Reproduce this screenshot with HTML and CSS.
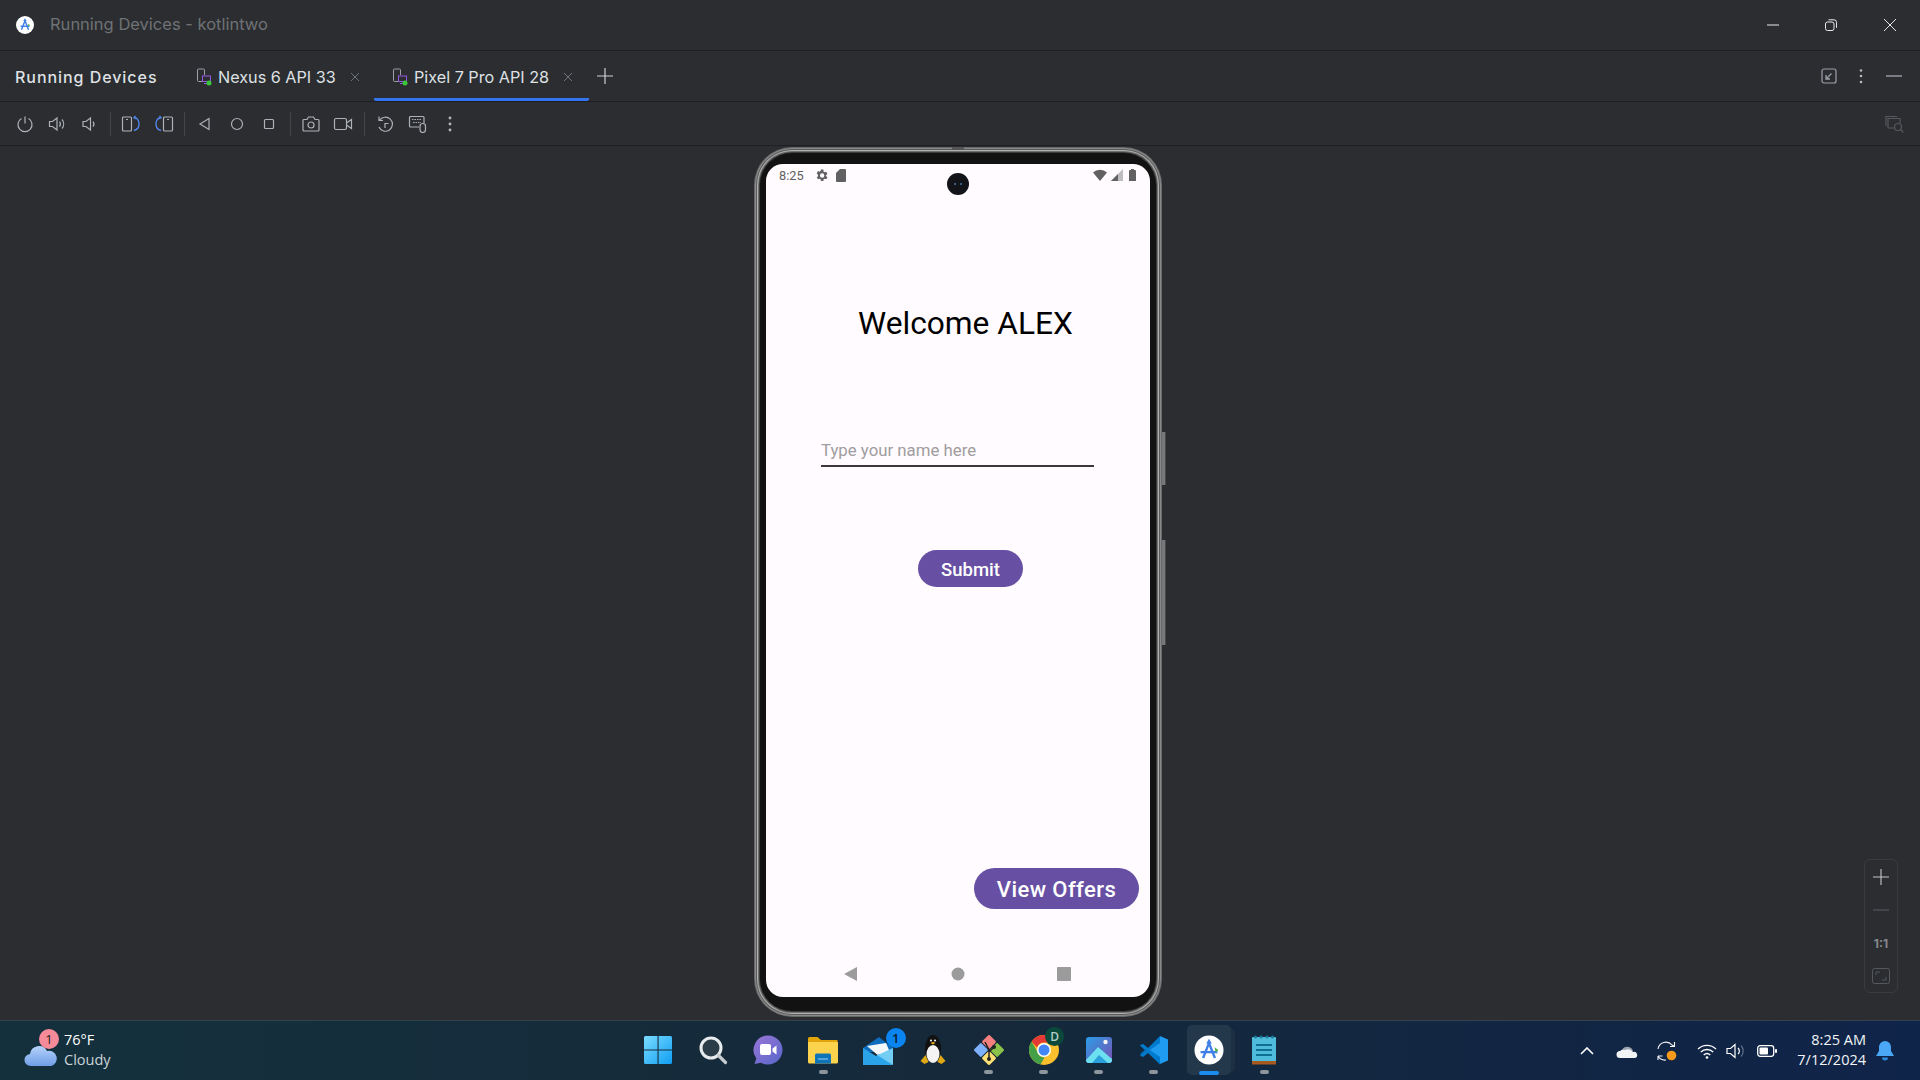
FILE: index.html
```html
<!DOCTYPE html>
<html lang="en">
<head>
<meta charset="utf-8">
<title>Running Devices - kotlintwo</title>
<link rel="stylesheet" href="styles.css">
</head>
<body>
<div class="app">
  <header class="titlebar">
    <svg class="as-small" width="18" height="18" viewBox="0 0 32 32"><circle cx="16" cy="16" r="16" fill="#fff"/><path d="M16 4l3 5h-1.500l6 15-2.400 1L16 12l-5.100 13-2.400-1 6-15H13z" fill="#3f7fe8"/><path d="M8 17h16v2.500H8z" fill="#3f7fe8"/><path d="M21 14l4 2-3 3z" fill="#4caf50"/></svg>
    <span class="title-text">Running Devices - kotlintwo</span>
    <div class="winctl">
      <svg width="14" height="14" viewBox="0 0 14 14"><path d="M1 7h12" stroke="#e8e8e8" stroke-width="1"/></svg>
      <svg width="14" height="14" viewBox="0 0 14 14"><rect x="1.500" y="4" width="8.500" height="8.500" rx="2" fill="none" stroke="#e8e8e8"/><path d="M4.500 1.800h5.500a2.500 2.500 0 0 1 2.500 2.500v5.500" fill="none" stroke="#e8e8e8"/></svg>
      <svg class="last-ctl" width="14" height="14" viewBox="0 0 14 14"><path d="M1 1l12 12M13 1L1 13" stroke="#e8e8e8" stroke-width="1"/></svg>
    </div>
  </header>

  <nav class="tabbar">
    <span class="tool-title">Running Devices</span>
    <div class="tab">
      <svg width="16" height="18" viewBox="0 0 16 18"><path d="M9 13.500H2.500a1 1 0 0 1-1-1V2a1 1 0 0 1 1-1h5a1 1 0 0 1 1 1v5" fill="none" stroke="#9da0a8"/><rect x="6.500" y="8" width="8" height="5.500" fill="none" stroke="#955ae0"/><path d="M8 15.500h5" stroke="#955ae0"/><circle cx="13" cy="15" r="2.500" fill="#39c739"/></svg>
      <span class="tab-label">Nexus 6 API 33</span>
      <svg class="tab-x" width="10" height="10" viewBox="0 0 10 10"><path d="M1 1l8 8M9 1L1 9" stroke="#6f737a"/></svg>
    </div>
    <div class="tab active">
      <svg width="16" height="18" viewBox="0 0 16 18"><path d="M9 13.500H2.500a1 1 0 0 1-1-1V2a1 1 0 0 1 1-1h5a1 1 0 0 1 1 1v5" fill="none" stroke="#9da0a8"/><rect x="6.500" y="8" width="8" height="5.500" fill="none" stroke="#955ae0"/><path d="M8 15.500h5" stroke="#955ae0"/><circle cx="13" cy="15" r="2.500" fill="#39c739"/></svg>
      <span class="tab-label">Pixel 7 Pro API 28</span>
      <svg class="tab-x" width="10" height="10" viewBox="0 0 10 10"><path d="M1 1l8 8M9 1L1 9" stroke="#6f737a"/></svg>
    </div>
    <svg class="tab-plus" width="16" height="16" viewBox="0 0 16 16"><path d="M8 0v16M0 8h16" stroke="#ced0d6" stroke-width="1.200"/></svg>
    <div class="tabbar-right">
      <svg width="16" height="16" viewBox="0 0 16 16"><rect x="1" y="1" width="14" height="14" rx="2" fill="none" stroke="#9da0a8" stroke-width="1.200"/><path d="M10.500 5.500L5.500 10.500M5 7v4h4" fill="none" stroke="#9da0a8" stroke-width="1.300"/></svg>
      <svg width="16" height="16" viewBox="0 0 16 16"><g fill="#b4b7bd"><circle cx="8" cy="2.500" r="1.300"/><circle cx="8" cy="8" r="1.300"/><circle cx="8" cy="14" r="1.300"/></g></svg>
      <svg class="last-ctl" width="16" height="16" viewBox="0 0 16 16"><path d="M0 8h16" stroke="#9da0a8" stroke-width="1.400"/></svg>
    </div>
  </nav>

  <div class="toolbar">
    <span class="tb"><svg width="18" height="18" viewBox="0 0 18 18"><path d="M5.500 3.500a7 7 0 1 0 7 0M9 1.500v7" fill="none" stroke="#aeb1b7" stroke-width="1.200"/></svg></span>
    <span class="tb"><svg width="18" height="18" viewBox="0 0 18 18"><path d="M1.500 6.500h3L9 3v12l-4.500-3.500h-3z" fill="none" stroke="#aeb1b7" stroke-width="1.200"/><path d="M11.500 6.500a4 4 0 0 1 0 5M14 4.500a7 7 0 0 1 0 9" fill="none" stroke="#aeb1b7" stroke-width="1.200"/></svg></span>
    <span class="tb"><svg width="18" height="18" viewBox="0 0 18 18"><path d="M3 6.500h3L10.500 3v12L6 11.500H3z" fill="none" stroke="#aeb1b7" stroke-width="1.200"/><path d="M13 6.500a4 4 0 0 1 0 5" fill="none" stroke="#aeb1b7" stroke-width="1.200"/></svg></span>
    <i class="sep sep1"></i>
    <span class="tb"><svg width="20" height="18" viewBox="0 0 20 18"><rect x="1.500" y="2" width="9" height="14" rx="1" fill="none" stroke="#aeb1b7" stroke-width="1.200"/><path d="M5 4.500h2" stroke="#aeb1b7"/><path d="M13 15.500c4-1 5-4 5-6.500s-1-5-3.500-6.500M14.500 .8l-1.500 2 2.500 1" fill="none" stroke="#548af7" stroke-width="1.300"/></svg></span>
    <span class="tb tb-shift"><svg width="20" height="18" viewBox="0 0 20 18"><rect x="9.500" y="2" width="9" height="14" rx="1" fill="none" stroke="#aeb1b7" stroke-width="1.200"/><path d="M13 4.500h2" stroke="#aeb1b7"/><path d="M7 15.500c-4-1-5-4-5-6.500s1-5 3.500-6.500M5.500 .8l1.500 2-2.500 1" fill="none" stroke="#548af7" stroke-width="1.300"/></svg></span>
    <i class="sep sep2"></i>
    <span class="tb"><svg width="16" height="16" viewBox="0 0 16 16"><path d="M12 2.500v11L3 8z" fill="none" stroke="#aeb1b7" stroke-width="1.200"/></svg></span>
    <span class="tb"><svg width="16" height="16" viewBox="0 0 16 16"><circle cx="8" cy="8" r="5.500" fill="none" stroke="#aeb1b7" stroke-width="1.200"/></svg></span>
    <span class="tb"><svg width="16" height="16" viewBox="0 0 16 16"><rect x="3.500" y="3.500" width="9" height="9" rx="1" fill="none" stroke="#aeb1b7" stroke-width="1.200"/></svg></span>
    <i class="sep sep3"></i>
    <span class="tb"><svg width="20" height="18" viewBox="0 0 20 18"><path d="M2 5.500a1 1 0 0 1 1-1h3l1.500-2.500h5L14 4.500h3a1 1 0 0 1 1 1V15a1 1 0 0 1-1 1H3a1 1 0 0 1-1-1z" fill="none" stroke="#aeb1b7" stroke-width="1.200"/><circle cx="10" cy="10" r="3" fill="none" stroke="#aeb1b7" stroke-width="1.200"/></svg></span>
    <span class="tb"><svg width="20" height="18" viewBox="0 0 20 18"><rect x="1.500" y="3.500" width="12" height="11" rx="1.500" fill="none" stroke="#aeb1b7" stroke-width="1.200"/><path d="M13.500 8l5-3.500v9l-5-3.500" fill="none" stroke="#aeb1b7" stroke-width="1.200"/></svg></span>
    <i class="sep sep4"></i>
    <span class="tb"><svg width="18" height="18" viewBox="0 0 18 18"><path d="M3.500 5.500A7 7 0 1 1 3 12M3 1.500v4h4M9 13V8.500h3.500" fill="none" stroke="#aeb1b7" stroke-width="1.200"/></svg></span>
    <span class="tb tb-kbd"><svg width="20" height="18" viewBox="0 0 20 18"><path d="M11 12H2.500a1 1 0 0 1-1-1V2.500a1 1 0 0 1 1-1H15a1 1 0 0 1 1 1V8" fill="none" stroke="#aeb1b7" stroke-width="1.200"/><path d="M4 4.500h10M5 7.500h8" stroke="#aeb1b7" stroke-dasharray="1.500 1"/><rect x="12" y="8.500" width="5.500" height="9" rx="2.700" fill="#2b2d30" stroke="#aeb1b7" stroke-width="1.200"/></svg></span>
    <span class="tb"><svg width="16" height="18" viewBox="0 0 16 18"><g fill="#b4b7bd"><circle cx="8" cy="3" r="1.400"/><circle cx="8" cy="9" r="1.400"/><circle cx="8" cy="15" r="1.400"/></g></svg></span>
    <svg class="tb-search" width="20" height="18" viewBox="0 0 20 18"><g fill="none" stroke="#55585d" stroke-width="1.200"><path d="M1 11V1.500h11"/><path d="M3 13V3.500h12V8M3 13h6"/><circle cx="13" cy="12" r="3.500"/><path d="M15.500 14.500l3 3"/></g></svg>
  </div>

  <main class="stage">
    <div class="phone">
      <div class="side-btn side-power"></div>
      <div class="side-btn side-volume"></div>
      <div class="camera"></div>
      <div class="screen">
        <div class="statusbar">
          <span class="clock">8:25</span>
          <svg class="gear" width="15" height="15" viewBox="0 0 24 24"><path fill="#616161" d="M19.400 13a7.500 7.500 0 0 0 0-2l2.100-1.600-2-3.500-2.500 1a7.400 7.400 0 0 0-1.700-1L15 2.300h-4l-.4 2.600a7.400 7.400 0 0 0-1.700 1l-2.500-1-2 3.500L6.500 11a7.500 7.500 0 0 0 0 2l-2.100 1.600 2 3.500 2.500-1a7.400 7.400 0 0 0 1.700 1l.4 2.600h4l.4-2.600a7.400 7.400 0 0 0 1.700-1l2.500 1 2-3.500zM13 15.500a3.500 3.500 0 1 1 0-7 3.500 3.500 0 0 1 0 7z"/></svg>
          <svg class="sd" width="10" height="13" viewBox="0 0 10 13"><path fill="#616161" d="M4 0h5a1 1 0 0 1 1 1v11a1 1 0 0 1-1 1H1a1 1 0 0 1-1-1V4z"/></svg>
          <span class="status-right">
            <svg width="14" height="12" viewBox="0 0 14 12"><path fill="#616161" d="M0 3.500a10 10 0 0 1 14 0L7 12z"/></svg>
            <svg width="12" height="12" viewBox="0 0 12 12"><path fill="#bdbdbd" d="M12 0v12H0z"/><path fill="#616161" d="M7 5v7H0z"/></svg>
            <svg class="batt" width="7" height="12" viewBox="0 0 7 12"><path fill="#616161" d="M2 0h3v1h1a1 1 0 0 1 1 1v10H0V2a1 1 0 0 1 1-1h1z"/></svg>
          </span>
        </div>
        <h1 class="welcome">Welcome ALEX</h1>
        <div class="field">Type your name here</div>
        <div class="btn btn-submit">Submit</div>
        <div class="btn btn-offers">View Offers</div>
        <div class="navbar">
          <svg width="14" height="16" viewBox="0 0 14 16"><path fill="#9b9b9b" d="M13 1v14L0 8z"/></svg>
          <svg width="14" height="14" viewBox="0 0 14 14"><circle cx="7" cy="7" r="6.500" fill="#9b9b9b"/></svg>
          <svg width="14" height="14" viewBox="0 0 14 14"><rect width="14" height="14" rx="1" fill="#9b9b9b"/></svg>
        </div>
      </div>
    </div>
    <aside class="zoompanel">
      <svg width="16" height="16" viewBox="0 0 16 16"><path d="M8 0v16M0 8h16" stroke="#c6c8cc" stroke-width="1.100"/></svg>
      <svg width="16" height="16" viewBox="0 0 16 16"><path d="M0 8h16" stroke="#55585d" stroke-width="1.100"/></svg>
      <span class="oneone">1:1</span>
      <svg width="18" height="16" viewBox="0 0 18 16"><rect x=".5" y=".5" width="17" height="15" rx="2" fill="none" stroke="#55585d"/><path d="M4 7V4h4M14 9v3h-4" fill="none" stroke="#55585d"/></svg>
    </aside>
  </main>

  <footer class="taskbar">
    <div class="weather">
      <div class="weather-icon">
        <svg width="34" height="26" viewBox="0 0 34 26"><defs><linearGradient id="cl" x1="0" y1="0" x2="0" y2="1"><stop offset="0" stop-color="#b6d2fa"/><stop offset="1" stop-color="#6f9ee8"/></linearGradient></defs><path fill="url(#cl)" d="M7 25a6 6 0 0 1-1-12 9 9 0 0 1 17-3 7.500 7.500 0 0 1 4 15z"/></svg>
        <span class="weather-badge">1</span>
      </div>
      <div class="weather-text"><span class="temp">76°F</span><span class="cond">Cloudy</span></div>
    </div>

    <div class="apps">
      <div class="app-item"><svg width="30" height="30" viewBox="0 0 30 30"><defs><linearGradient id="w" x1="0" y1="0" x2="1" y2="1"><stop offset="0" stop-color="#7bdcff"/><stop offset="1" stop-color="#0f9ef2"/></linearGradient></defs><path fill="url(#w)" d="M1 2.500A1.500 1.500 0 0 1 2.500 1h12v13.400H1zM15.600 1h12A1.500 1.500 0 0 1 29 2.500v11.900H15.600zM1 15.600h13.500V29h-12A1.500 1.500 0 0 1 1 27.500zM15.600 15.600H29v11.900a1.500 1.500 0 0 1-1.500 1.500H15.600z"/></svg></div>
      <div class="app-item"><svg width="30" height="30" viewBox="0 0 30 30"><circle cx="13" cy="13" r="10" fill="#2b3d48" stroke="#e8ecef" stroke-width="3"/><path d="M20.500 20.500l7 7" stroke="#c8ccd0" stroke-width="3.200" stroke-linecap="round"/></svg></div>
      <div class="app-item"><svg width="30" height="30" viewBox="0 0 30 30"><defs><linearGradient id="tm" x1="0" y1="0" x2="1" y2="1"><stop offset="0" stop-color="#9b76d8"/><stop offset="1" stop-color="#5566c8"/></linearGradient></defs><path fill="url(#tm)" d="M15 .5A14.500 14.500 0 1 1 8 27.700L1.500 29l1.800-5.500A14.500 14.500 0 0 1 15 .5z"/><rect x="7" y="9" width="11" height="11" rx="2" fill="#fff"/><path d="M19.500 13.500l4-3v9l-4-3z" fill="#fff"/></svg></div>
      <div class="app-item has-dot"><svg width="32" height="28" viewBox="0 0 32 28"><path fill="#e3a50c" d="M1 2.500A1.500 1.500 0 0 1 2.500 1h8L14 4h16.500v4H1z"/><path fill="#fcd34d" d="M1 6h30v20a1.500 1.500 0 0 1-1.500 1.500h-27A1.500 1.500 0 0 1 1 26z"/><path fill="#0f74b8" d="M8 19a1.500 1.500 0 0 1 1.500-1.500h13A1.500 1.500 0 0 1 24 19v8.500H8z"/><path d="M11 23h10" stroke="#7ec5f0" stroke-width="1.200"/></svg></div>
      <div class="app-item badged"><svg width="32" height="30" viewBox="0 0 32 30"><path fill="#0f6cbd" d="M1 12L17 1l14 11v4H1z"/><path fill="#f4f7fa" d="M5 10l19-3 3 7-9 7z"/><path fill="#2ba3e8" d="M1 12l13 8 3-2 14 11H1z"/><path fill="#74cdf5" d="M31 12v17L15 19l3-1z"/></svg><span class="app-badge">1</span></div>
      <div class="app-item"><svg width="26" height="32" viewBox="0 0 26 32"><ellipse cx="13" cy="15" rx="8" ry="14" fill="#111"/><ellipse cx="13" cy="20" rx="6.500" ry="9" fill="#f4f4f4"/><circle cx="11" cy="6.500" r="1" fill="#fff"/><circle cx="15" cy="6.500" r="1" fill="#fff"/><path d="M10.500 9L13 7.800 15.500 9 13 10.500z" fill="#e0a815"/><path d="M.5 27l5-6 3 7-4 2zM25.500 27l-5-6-3 7 4 2z" fill="#e0a815"/></svg></div>
      <div class="app-item has-dot"><svg width="30" height="30" viewBox="0 0 30 30"><g transform="rotate(45 15 15)"><rect x="4" y="4" width="10.500" height="10.500" rx="1.500" fill="#f47f7f"/><rect x="15.500" y="4" width="10.500" height="10.500" rx="1.500" fill="#8ac24a"/><rect x="4" y="15.500" width="10.500" height="10.500" rx="1.500" fill="#7eb1fa"/><rect x="15.500" y="15.500" width="10.500" height="10.500" rx="1.500" fill="#fde073"/></g><path d="M11 7l4 8v9M20 12l-5 5" stroke="#222" stroke-width="1.500" fill="none"/><circle cx="15" cy="24" r="2" fill="#222"/><circle cx="20" cy="12" r="2" fill="#222"/></svg></div>
      <div class="app-item has-dot chrome"><svg width="30" height="30" viewBox="0 0 30 30"><circle cx="15" cy="15" r="15" fill="#fbc02d"/><path fill="#e53935" d="M15 0a15 15 0 0 1 13 7.500H15a7.500 7.500 0 0 0-7 5L2.600 6.500A15 15 0 0 1 15 0z"/><path fill="#43a047" d="M2.600 6.500L8.500 17a7.500 7.500 0 0 0 7 5.500L11.500 29.500A15 15 0 0 1 2.600 6.500z"/><circle cx="15" cy="15" r="7" fill="#fff"/><circle cx="15" cy="15" r="5.500" fill="#4285f4"/></svg><span class="chrome-badge">D</span></div>
      <div class="app-item has-dot"><svg width="26" height="26" viewBox="0 0 26 26"><defs><linearGradient id="ph" x1="0" y1="0" x2="1" y2="1"><stop offset="0" stop-color="#2a9de8"/><stop offset="1" stop-color="#7a4fb0"/></linearGradient></defs><rect width="26" height="26" rx="3" fill="url(#ph)"/><circle cx="19.500" cy="5" r="2.200" fill="#f2f2f2"/><path fill="#6ce0f0" d="M0 23l12-13 14 12v1a3 3 0 0 1-3 3H3a3 3 0 0 1-3-3z"/><path fill="#2aa0dc" d="M6 26l7-8 9 8z"/></svg></div>
      <div class="app-item has-dot"><svg width="30" height="30" viewBox="0 0 30 30"><path fill="#0065a9" d="M1 10.500L3 9l7 5.500L8 16l-5 4.500-2-1.500 4.500-4.200z"/><path fill="#007acc" d="M21 1L9 13l-5-4-3 1.500 6 5-6 5L4 22l5-4 12 11.500z"/><path fill="#1f9cf0" d="M21 1l8 3.500v21L21 29V8L11 15l10 7z"/></svg></div>
      <div class="app-item active-app"><i class="stack"></i><span class="active-box"><svg width="30" height="30" viewBox="0 0 32 32"><circle cx="16" cy="16" r="15.500" fill="#fff"/><path d="M16 4l3 5h-1.500l6 15-2.400 1L16 12l-5.100 13-2.400-1 6-15H13z" fill="#3f7fe8"/><path d="M7 17h18v2.500H7z" fill="#3f7fe8"/><path d="M22 13l4 3-3 3z" fill="#4caf50"/></svg></span><i class="active-bar"></i></div>
      <div class="app-item has-dot"><svg width="24" height="30" viewBox="0 0 24 30"><rect y="2" width="24" height="27" rx="1" fill="#4fbcdc"/><rect y="26" width="24" height="3.500" fill="#a85b1e"/><path d="M4 10h16M4 15h16M4 20h16" stroke="#0e6f92" stroke-width="2"/><g fill="#1d7d9e"><circle cx="3.500" cy="2" r="1.500"/><circle cx="9" cy="2" r="1.500"/><circle cx="15" cy="2" r="1.500"/><circle cx="20.500" cy="2" r="1.500"/></g></svg></div>
    </div>

    <div class="tray">
      <svg class="tr-chev" width="14" height="8" viewBox="0 0 14 8"><path d="M1 7l6-6 6 6" fill="none" stroke="#fff" stroke-width="1.600"/></svg>
      <svg class="tr-cloud" width="22" height="14" viewBox="0 0 22 14"><path fill="#9aa3ad" d="M6 6a6 6 0 0 1 11 1l-6 5H4a4 4 0 0 1 2-6z"/><path fill="#f1f3f5" d="M4 14a3.500 3.500 0 0 1 0-7 5 5 0 0 1 5-1 6 6 0 0 1 8 2 3 3 0 0 1 2 6z"/></svg>
      <svg class="tr-sync" width="22" height="22" viewBox="0 0 22 22"><path d="M2 9a8 8 0 0 1 14-4l2 1M18.500 2v4.500H14M2 16v4M2 16h4.500M2 16a8 8 0 0 0 8 4" fill="none" stroke="#f1f3f5" stroke-width="1.100"/><circle cx="15.500" cy="15.500" r="4.800" fill="#f79a1b"/></svg>
      <svg class="tr-wifi" width="20" height="16" viewBox="0 0 20 16"><path d="M1 6a13 13 0 0 1 18 0M3.800 9a9 9 0 0 1 12.400 0M6.700 12a5 5 0 0 1 6.600 0" fill="none" stroke="#fff" stroke-width="1.300"/><circle cx="10" cy="14.500" r="1.300" fill="#fff"/></svg>
      <svg class="tr-vol" width="20" height="18" viewBox="0 0 20 18"><path d="M1 6.500h3.500L9 2.500v13l-4.500-4H1z" fill="none" stroke="#fff" stroke-width="1.200"/><path d="M12 6a4 4 0 0 1 0 6" fill="none" stroke="#fff" stroke-width="1.200"/><path d="M15 3.500a8 8 0 0 1 0 11" fill="none" stroke="#5d6d87" stroke-width="1.200"/></svg>
      <svg class="tr-bat" width="20" height="12" viewBox="0 0 20 12"><rect x=".7" y=".7" width="16" height="10.600" rx="2.500" fill="none" stroke="#fff" stroke-width="1.300"/><rect x="2.500" y="2.500" width="8.500" height="7" rx="1" fill="#fff"/><rect x="18" y="4" width="2" height="4" rx="1" fill="#fff"/></svg>
      <div class="clockbox"><span>8:25 AM</span><span>7/12/2024</span></div>
      <svg class="tr-bell" width="18" height="20" viewBox="0 0 18 20"><path fill="#4aa8f7" d="M9 0a6 6 0 0 1 6 6v4l3 5H0l3-5V6a6 6 0 0 1 6-6z"/><path fill="#2b8ee0" d="M6 16.500h6a3 3 0 0 1-6 0z"/></svg>
    </div>
  </footer>
</div>
</body>
</html>
```
FILE: styles.css
```css
* { box-sizing: border-box; }
html, body { margin: 0; padding: 0; height: 100%; }
body { background: #2b2d30; font-family: Inter, "Noto Sans", sans-serif; overflow: hidden; }
svg { display: block; flex: none; }
.app { width: 1920px; height: 1080px; display: flex; flex-direction: column; }

.titlebar { height: 51px; display: flex; align-items: center; padding-left: 16px; border-bottom: 1px solid #1e1f22; flex: none; }
.title-text { margin-left: 16px; margin-top: -2px; font-size: 16.5px; color: #6f7276; }
.winctl { margin-left: auto; display: flex; gap: 44px; padding-right: 23px; }
.last-ctl { margin-left: 1px; }

.tabbar { height: 51px; display: flex; align-items: center; border-bottom: 1px solid #1e1f22; flex: none; }
.tool-title { margin-left: 15px; width: 181px; padding-top: 2px; font-size: 16px; font-weight: 500; letter-spacing: .95px; color: #dfe1e5; }
.tab { height: 50px; display: flex; align-items: center; padding-top: 2px; color: #dfe1e5; font-size: 16.2px; width: 178px; }
.tab-label { margin-left: 6px; letter-spacing: 0; white-space: nowrap; }
.tab-x { margin-left: 14px; }
.tab.active { width: 215px; padding-left: 18px; border-bottom: 3px solid #3574f0; border-radius: 0 0 2px 2px; padding-top: 5px; }
.tab-plus { margin-left: 8px; margin-top: -1px; }
.tabbar-right { margin-left: auto; display: flex; gap: 16px; padding-right: 18px; }

.toolbar { height: 44px; display: flex; align-items: center; padding-left: 9px; border-bottom: 1px solid #1e1f22; flex: none; }
.tb { width: 32px; height: 32px; display: flex; align-items: center; justify-content: center; flex: none; }
.tb-shift { position: relative; left: 1px; }
.sep { width: 1px; height: 24px; background: #43454a; flex: none; }
.sep1 { margin: 0 4px 0 5px; }
.sep2 { margin: 0 4px 0 5px; }
.sep3 { margin: 0 4px 0 5px; }
.sep4 { margin: 0 4px 0 5px; }
.tb-kbd { margin-left: 1px; }
.tb-search { margin-left: auto; margin-right: 15px; }

.stage { position: relative; flex: 1; display: flex; justify-content: center; padding: 7px 4px 0 0; }
.phone { position: relative; width: 396px; height: 858px; background: #121212; border-radius: 32px; padding: 11px 6px 14px; box-shadow: 0 0 0 1px #3c3c3c, 0 0 0 2px #6f6f6f, 0 0 0 3px #b0b0b0, 0 0 0 4px #5a5a5a, 0 0 0 5px #8a8a8a, 0 0 0 6px #66686a; }
.phone::before { content: ""; position: absolute; left: 192px; top: -6px; width: 12px; height: 3px; background: #555; }
.side-btn { position: absolute; left: 402px; width: 4px; background: #77787a; border-radius: 0 1px 1px 0; border-right: 1px solid #4a4a4a; }
.side-power { top: 279px; height: 53px; }
.side-volume { top: 387px; height: 105px; }
.camera { position: absolute; left: 187px; top: 20px; width: 22px; height: 22px; border-radius: 50%; background: radial-gradient(circle at 8px 11px, #3a5a8a 0 1px, transparent 1.5px), radial-gradient(circle at 14px 11px, #3a5a8a 0 1px, transparent 1.5px), #12141a; z-index: 1; }

.screen { height: 833px; background: #fffbfe; border-radius: 17px; display: flex; flex-direction: column; font-family: Roboto, sans-serif; overflow: hidden; }
.statusbar { height: 22px; display: flex; align-items: center; padding: 0 14px 0 13px; flex: none; }
.clock { font-size: 12.8px; color: #616161; width: 35px; }
.sd { margin-left: 7px; }
.status-right { margin-left: auto; display: flex; gap: 4px; align-items: center; }
.batt { margin-left: 2px; }
.welcome { margin: 118px 0 0 92px; font-size: 31.7px; line-height: 40px; font-weight: 400; color: #000; white-space: nowrap; }
.field { margin: 91px 0 0 55px; width: 273px; height: 32px; font-size: 16.8px; line-height: 31px; color: #a09da1; border-bottom: 2px solid #3a3a3c; }
.btn { background: #6750a4; color: #fff; font-weight: 500; display: flex; align-items: center; justify-content: center; border-radius: 24px; }
.btn-submit { margin: 83px 0 0 152px; width: 105px; height: 37px; font-size: 18.5px; padding-top: 2px; }
.btn-offers { margin: 281px 0 0 208px; width: 165px; height: 41px; font-size: 22px; letter-spacing: .42px; padding-top: 1px; }
.navbar { margin-top: auto; height: 46px; display: flex; padding: 0 79px 0 78px; justify-content: space-between; align-items: center; }

.zoompanel { position: absolute; left: 1864px; top: 713px; width: 34px; height: 134px; border: 1px solid #393b40; border-radius: 6px; display: flex; flex-direction: column; align-items: center; padding-top: 9px; gap: 17px; }
.oneone { font-size: 12px; font-weight: 700; color: #85888d; line-height: 14px; margin: 2px 0 0; }

.taskbar { height: 60px; flex: none; display: grid; grid-template-columns: 1fr auto 1fr; align-items: center; background: linear-gradient(90deg, #14303d 0%, #15293a 50%, #0f2449 100%); border-top: 1px solid #34424e; font-family: "Open Sans", "Noto Sans", sans-serif; color: #fff; }
.weather { display: flex; align-items: center; padding-left: 24px; margin-top: -1px; }
.weather-icon { position: relative; width: 40px; height: 40px; display: flex; align-items: flex-end; padding-bottom: 3px; }
.weather-badge { position: absolute; left: 15px; top: -1px; width: 20px; height: 20px; border-radius: 50%; background: #f58a99; color: #222; font-size: 13px; line-height: 20px; text-align: center; }
.weather-text { display: flex; flex-direction: column; font-size: 14.5px; line-height: 20px; }
.cond { color: #cdd4d8; }

.apps { display: flex; padding-left: 2px; margin-top: -2px; height: 59px; }
.app-item { position: relative; width: 55.15px; height: 59px; display: flex; align-items: center; justify-content: center; }
.has-dot::after { content: ""; position: absolute; left: 23px; bottom: 5px; width: 9px; height: 4px; border-radius: 2px; background: #8d969d; }
.badged svg { margin-top: 2px; }
.app-badge { position: absolute; left: 35px; top: 8px; width: 20px; height: 20px; border-radius: 50%; background: #0a84f0; color: #0d2030; font-size: 13px; font-weight: 600; line-height: 20px; text-align: center; }
.chrome-badge { position: absolute; left: 29px; top: 7px; width: 19px; height: 19px; border-radius: 50%; background: #0b4a3a; color: #b4cfc6; font-size: 12px; font-weight: 600; line-height: 19px; text-align: center; }
.active-box { position: relative; width: 44px; height: 50px; border-radius: 5px; background: #24384b; display: flex; align-items: center; justify-content: center; }
.stack { position: absolute; left: 10px; top: 8px; width: 43px; height: 44px; border-radius: 5px; background: #1c3042; }
.active-bar { position: absolute; left: 17px; bottom: 4px; width: 20px; height: 4px; border-radius: 2px; background: #1a8cf0; }

.tray { display: flex; align-items: center; justify-content: flex-end; padding-right: 26px; position: relative; }
.tr-cloud { margin-left: 22px; }
.tr-sync { margin-left: 18px; }
.tr-wifi { margin-left: 19px; }
.tr-vol { margin-left: 9px; }
.tr-bat { margin-left: 11px; }
.clockbox { margin-left: 20px; display: flex; flex-direction: column; align-items: flex-end; font-size: 14.5px; line-height: 20px; color: #f2f4f6; margin-top: -2px; }
.tr-bell { margin-left: 10px; }
```
